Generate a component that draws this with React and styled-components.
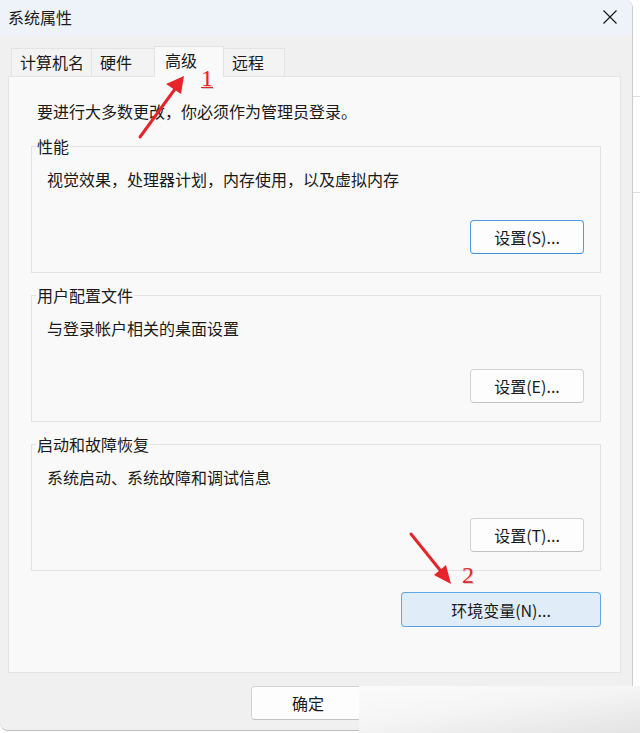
import styled, { createGlobalStyle } from "styled-components";

const GlobalStyle = createGlobalStyle`
  body {
    margin: 0;
    background: #ffffff;
    font-family: "Noto Sans CJK SC", "Noto Sans", sans-serif;
    color: #1a1a1a;
  }
`;

const tabs = [
  { label: "计算机名", width: 81 },
  { label: "硬件", width: 64 },
  { label: "高级", width: 70, active: true },
  { label: "远程", width: 62 },
];

const groups = [
  { legend: "性能", text: "视觉效果，处理器计划，内存使用，以及虚拟内存", button: "设置(S)...", primary: true },
  { legend: "用户配置文件", text: "与登录帐户相关的桌面设置", button: "设置(E)..." },
  { legend: "启动和故障恢复", text: "系统启动、系统故障和调试信息", button: "设置(T)..." },
];

export default function App() {
  return (
    <>
      <GlobalStyle />
      <Page>
        <Window>
          <TitleBar>
            <Title>系统属性</Title>
            <CloseIcon viewBox="0 0 14 14">
              <path d="M0.5 0.5 L13.5 13.5 M13.5 0.5 L0.5 13.5" />
            </CloseIcon>
          </TitleBar>
          <Body>
            <TabStrip>
              {tabs.map((tab) => (
                <Tab key={tab.label} $width={tab.width} $active={tab.active}>
                  {tab.label}
                </Tab>
              ))}
            </TabStrip>
            <Panel>
              <Intro>要进行大多数更改，你必须作为管理员登录。</Intro>
              <Groups>
                {groups.map((group) => (
                  <Group key={group.legend}>
                    <Legend>{group.legend}</Legend>
                    <GroupText>{group.text}</GroupText>
                    <ButtonRow>
                      <Button $w={114} $variant={group.primary ? "focus" : "plain"}>
                        {group.button}
                      </Button>
                    </ButtonRow>
                  </Group>
                ))}
              </Groups>
              <EnvRow>
                <Button $w={200} $h={35} $variant="accent">
                  环境变量(N)...
                </Button>
              </EnvRow>
            </Panel>
            <Footer>
              <Button $w={114}>确定</Button>
            </Footer>
          </Body>
        </Window>
        <SideStrip>
          <Rule />
          <Rule />
        </SideStrip>

        <Cover />
        <Marks viewBox="0 0 640 733">
          <line x1="140" y1="137" x2="175" y2="89" />
          <polygon points="184,76 181,94 166,84" />
          <line x1="411" y1="534" x2="440" y2="570" />
          <polygon points="451,584 434,575 446,565" />
        </Marks>
        <Step $left={201} $top={66} $underline>
          1
        </Step>
        <Step $left={462} $top={563}>
          2
        </Step>
      </Page>
    </>
  );
}

const Page = styled.div`
  position: relative;
  width: 640px;
  height: 733px;
  display: flex;
  overflow: hidden;
`;

const Window = styled.div`
  width: 633px;
  height: 731px;
  box-sizing: border-box;
  display: flex;
  flex-direction: column;
  background: #f0f0f0;
  border-right: 1px solid #cdcdcd;
  border-bottom: 1px solid #bdbdbd;
  border-radius: 0 8px 0 8px;
  overflow: hidden;
`;

const TitleBar = styled.div`
  height: 35px;
  flex-shrink: 0;
  display: flex;
  align-items: center;
  justify-content: space-between;
  padding: 0 15px 2px 8px;
  box-sizing: border-box;
  background: #eef3f9;
`;

const Title = styled.div`
  font-size: 16px;
  line-height: 20px;
`;

const CloseIcon = styled.svg`
  width: 14px;
  height: 14px;
  fill: none;
  stroke: #1a1a1a;
  stroke-width: 1.2;
`;

const Body = styled.div`
  flex: 1;
  display: flex;
  flex-direction: column;
  padding: 11px 11px 0 8px;
`;

const TabStrip = styled.div`
  display: flex;
  align-items: flex-end;
  height: 30px;
  margin-left: 3px;
`;

const Tab = styled.div`
  position: relative;
  z-index: ${(p) => (p.$active ? 2 : 1)};
  width: ${(p) => p.$width}px;
  height: ${(p) => (p.$active ? 31 : 28)}px;
  margin-bottom: ${(p) => (p.$active ? -1 : 0)}px;
  box-sizing: border-box;
  padding-left: ${(p) => (p.$active ? 10 : 8)}px;
  border: 1px solid #e3e3e3;
  border-bottom: none;
  background: ${(p) => (p.$active ? "#f9f9f9" : "#f3f3f3")};
  font-size: 16px;
  line-height: 26px;
  & + & {
    margin-left: -1px;
  }
`;

const Panel = styled.div`
  height: 597px;
  box-sizing: border-box;
  display: flex;
  flex-direction: column;
  padding: 23px 19px 0 22px;
  border: 1px solid #e4e4e4;
  background: #f9f9f9;
`;

const Intro = styled.div`
  padding-left: 6px;
  font-size: 16px;
  line-height: 22px;
`;

const Groups = styled.div`
  margin-top: 13px;
  display: flex;
  flex-direction: column;
  gap: 11px;
`;

const Group = styled.fieldset`
  margin: 0;
  min-width: 0;
  padding: 11px 16px 18px 4px;
  border: 1px solid #e2e2e2;
`;

const Legend = styled.legend`
  padding: 0 1px;
  font-size: 16px;
  line-height: 22px;
`;

const GroupText = styled.div`
  padding-left: 11px;
  font-size: 16px;
  line-height: 22px;
`;

const ButtonRow = styled.div`
  display: flex;
  justify-content: flex-end;
  margin-top: 30px;
`;

const EnvRow = styled.div`
  display: flex;
  justify-content: flex-end;
  margin-top: 21px;
`;

const Button = styled.button`
  width: ${(p) => p.$w}px;
  height: ${(p) => p.$h || 34}px;
  padding: 0;
  box-sizing: border-box;
  font-family: inherit;
  font-size: 16px;
  color: #1a1a1a;
  border-radius: 4px;
  border: 1px solid
    ${(p) => (p.$variant === "focus" ? "#4f9be3" : p.$variant === "accent" ? "#62a6e6" : "#d3d3d3")};
  border-bottom-color: ${(p) =>
    p.$variant === "focus" ? "#3f8fdc" : p.$variant === "accent" ? "#58a0e2" : "#c2c2c2"};
  background: ${(p) => (p.$variant === "accent" ? "#e0edf9" : "#fdfdfd")};
`;

const Footer = styled.div`
  flex: 1;
  padding: 13px 0 0 243px;
`;

const SideStrip = styled.div`
  flex: 1;
  padding-top: 96px;
  background: #ffffff;
`;

const Rule = styled.div`
  height: 1px;
  background: #dedede;
  margin-bottom: 95px;
`;

const Cover = styled.div`
  position: absolute;
  left: 359px;
  top: 686px;
  right: 0;
  bottom: 0;
  background: linear-gradient(172deg, #fbfbfb 0%, #f5f5f5 45%, #e3e3e3 100%);
`;

const Marks = styled.svg`
  position: absolute;
  z-index: 5;
  left: 0;
  top: 0;
  width: 640px;
  height: 733px;
  pointer-events: none;
  line {
    stroke: #e5252b;
    stroke-width: 3;
    stroke-linecap: round;
  }
  polygon {
    fill: #e5252b;
  }
`;

const Step = styled.span`
  position: absolute;
  z-index: 5;
  left: ${(p) => p.$left}px;
  top: ${(p) => p.$top}px;
  font-family: "Liberation Serif", serif;
  font-size: 24px;
  line-height: 1;
  color: #e5252b;
  text-decoration: ${(p) => (p.$underline ? "underline" : "none")};
  text-decoration-thickness: 1px;
  text-shadow: 1px 1px 0 rgba(0, 0, 0, 0.18);
`;
